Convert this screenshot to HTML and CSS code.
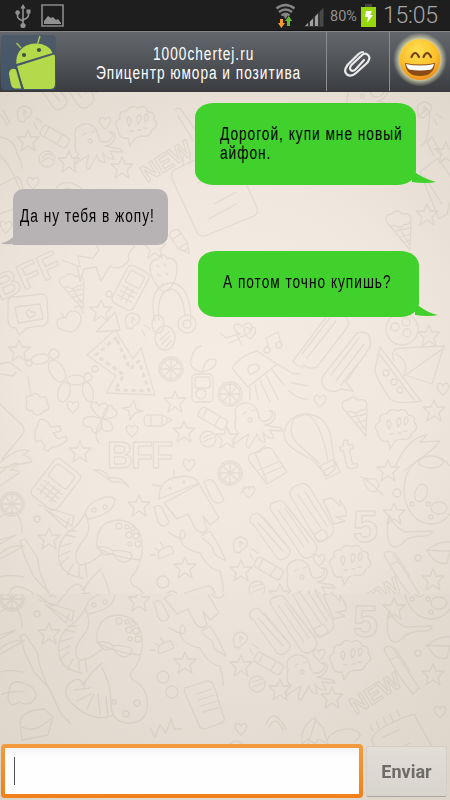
FILE: index.html
```html
<!DOCTYPE html>
<html lang="ru">
<head>
<meta charset="utf-8">
<title>1000chertej.ru</title>
<link rel="stylesheet" href="styles.css">
</head>
<body>
<div class="phone">
  <div class="status">
    <svg class="usb" width="16" height="26" viewBox="0 0 16 26"><path d="M8 3v19M2.500 10v3q0 3 5.500 5M13.500 9v3q0 3-5.500 5" fill="none" stroke="#929292" stroke-width="1.600"/><path d="M8 1l2.600 4.500H5.400z" fill="#929292"/><circle cx="2.600" cy="9.600" r="2.300" fill="#929292"/><path d="M11.500 6.500h4v4h-4z" fill="#929292"/><circle cx="8" cy="22.500" r="2.600" fill="#929292"/></svg>
    <svg class="gallery" width="23" height="23" viewBox="0 0 23 23"><path d="M1 1h21v21H1z" fill="none" stroke="#8b8b8b" stroke-width="1.600"/><path d="M3 20v-3l4-5 3 2 2-1 3 3 2-1 3 4v1z" fill="#929292"/></svg>
    <svg class="wifi" width="22" height="25" viewBox="0 0 22 25"><g fill="none" stroke="#858585" stroke-width="2.300"><path d="M1.500 5.500q9-7 18 0M4 9q6.500-5 13 0M6.500 12.500q4-3.500 8 0"/></g><path d="M8 12h5l-2.500 4z" fill="#858585"/><path d="M5 16h3v4h2l-3.700 5L3 20h2z" fill="#f79a2d"/><path d="M12 23v-5h-2l3.700-5 3.500 5h-2.200v5z" fill="#66b82e"/></svg>
    <svg class="signal" width="21" height="20" viewBox="0 0 21 20"><path d="M0 20L20 0v20z" fill="#343434"/><path d="M1 19l3-3v3zM6 14.500l3-3V19H6zM11 9.500l3-3V19h-3z" fill="#a0a0a0"/><path d="M16 4.500l3-3V19h-3z" fill="#494949"/></svg>
    <span class="percent">80%</span>
    <svg class="battery" width="15" height="23" viewBox="0 0 15 23"><path d="M4 0h7v3H4z" fill="#444"/><path d="M0 3h15v20H0z" fill="#97d70c"/><path d="M5 7h6l-2 4h3l-6 8 1-6H4z" fill="#fff"/></svg>
    <span class="clock">15:05</span>
  </div>

  <header class="bar">
    <svg class="avatar" width="55" height="55" viewBox="0 0 55 55">
      <defs><linearGradient id="av" x1="0" y1="0" x2="0" y2="1"><stop offset="0" stop-color="#4d5a69"/><stop offset="1" stop-color="#405469"/></linearGradient></defs>
      <rect width="55" height="55" rx="4" fill="url(#av)"/>
      <g fill="#b4da4b"><path d="M15.500 29C14 18 22 9 34 8.500q14 0 17.500 9.500z"/><path d="M15 31.500L53 19.500Q54 20 54 22v27q0 5-5 5H23z"/><path d="M8 39q0-4 3-5 4-1 6 3l4 16.500h-7q-3-.5-4-4z"/></g>
      <path d="M20 13l-4.500-5M36.500 9L39 1" stroke="#a3c652" stroke-width="1.500"/><path d="M15 31l6.500 23" stroke="#41536a" stroke-width="2"/><circle cx="23" cy="20" r="2.100" fill="#414f49"/><circle cx="38" cy="15" r="2.100" fill="#414f49"/>
    </svg>
    <div class="title">
      <div><span class="narrow t1">1000chertej.ru</span></div>
      <div><span class="narrow t2">Эпицентр юмора и позитива</span></div>
    </div>
    <div class="action">
      <svg width="30" height="28" viewBox="0 0 30 28"><path d="M21 10L12.500 19.500Q9.500 22 7.700 20t.8-5L18 6q4-4 7-1t-.5 7.500L13 23q-5 4.500-9 1.500t.5-9.500L15 4.500q2.500-2.500 5-2.500" fill="none" stroke="#e9e9e9" stroke-width="2.200" stroke-linecap="round"/></svg>
    </div>
    <div class="action emoji">
      <svg width="54" height="56" viewBox="0 0 54 56">
        <defs><radialGradient id="face" cx=".45" cy=".3" r=".75"><stop offset="0" stop-color="#ffe052"/><stop offset=".6" stop-color="#fcc02a"/><stop offset="1" stop-color="#ec8517"/></radialGradient><radialGradient id="glow"><stop offset=".7" stop-color="#f3efc0"/><stop offset=".82" stop-color="#d8d7b0" stop-opacity=".65"/><stop offset="1" stop-color="#d8d7b0" stop-opacity="0"/></radialGradient></defs>
        <circle cx="27" cy="27.500" r="27" fill="url(#glow)"/><circle cx="27" cy="27.500" r="20.500" fill="url(#face)"/>
        <path d="M18.500 25q3.500-8 7.500 0M30.500 25q3.500-8 7.500 0" fill="none" stroke="#764215" stroke-width="2.200" stroke-linecap="round"/><path d="M12 31q15 3 30 0-1 13-15 13T12 31z" fill="#8b4a16"/><path d="M13 32q14 3 28 0-.5 4-3 5.500-11 2-22 0-2.500-1.500-3-5.500z" fill="#fff"/>
      </svg>
    </div>
  </header>

  <div class="wall">
    <svg class="doodles" width="450" height="708" viewBox="0 92 450 708" aria-hidden="true">
      <defs>
        <radialGradient id="bgTop" gradientUnits="userSpaceOnUse" cx="225" cy="375" r="380"><stop offset="0" stop-color="#f5ede3"/><stop offset=".5" stop-color="#f0e8de"/><stop offset="1" stop-color="#ded6cb"/></radialGradient>
        <radialGradient id="bgLow" gradientUnits="userSpaceOnUse" cx="225" cy="560" r="350"><stop offset="0" stop-color="#efe7dd"/><stop offset="1" stop-color="#dbd3c8"/></radialGradient>
        <clipPath id="upper"><path d="M0 92h450v502H0z"/></clipPath><clipPath id="lower"><path d="M0 594h450v206H0z"/></clipPath>
        <path id="star" d="M0-11l3 7 8 0-6 6 2 8-7-5-7 5 2-8-6-6 8 0z"/>
        <path id="heart" d="M0 6q-8-7-5-11 3-2 5 2 2-4 5-2 3 4-5 11z"/>
        <g id="wheel"><circle r="12"/><circle r="10"/><path d="M-10 0h20M0-10v20M-7-7l14 14M-7 7l14-14"/></g>
        <g id="squid"><path d="M-12 0q-4-12 8-15 11-1 14 10 1 8 5 8 6 1 9-5 2-4-3-5 7-1 6 6-3 8-10 8l9 2q8 0 9 4-7 0-13-1l4 8q-7 1-11-6l2 10q-7-1-8-8l-8 14q-5 0 0-14-9 5-14 10-3-4 4-11-6-2-3-15z"/><path d="M-5-4l3-2M4-7l3-1"/><circle cx="2" cy="2" r="2"/></g>
        <g id="cloud"><path d="M-18 5q-6-7 2-10-2-9 7-8 3-7 11-3 8-4 10 4 8 0 6 7 6 7-2 11-2 8-11 6l-6 2-5 8-2-8q-9 2-10-9z"/><path d="M-7 2q-4-8 0-9 4 3 0 9M2 0q-3-9 2-9 3 4-2 9M9-2q-2-8 2-8 3 5-2 8M-6 7h3M2 6h3M8 4h3"/></g>
        <g id="bulb"><path d="M-7 8q-5-14 6-15 11 3 4 11-5 2-5 5zM-2 3v-6l3 3M10 5l6 4M8 10l3 6"/></g>
        <g id="usbkey"><rect x="-15" y="-5" width="30" height="11" rx="3" transform="rotate(30)"/><path d="M-6-9L-10-1M7-1L2 7"/></g>
        <g id="pencil"><path d="M-12-5h16l10 5-10 6h-16q-4-5 0-11zM-7-5v11M4-5v11M9-2v5"/></g>
        <g id="bubbles"><path d="M-42-12q-5-1-3-6 4-7 9-4L-6 12q3 5-2 9-6 5-10 1zM-24-26q-3-7 5-8 6-4 10 3L18 4q8 10-1 16-6 5-11-1zM-5-41q0-8 8-10 7-4 12 3l23 38q3 9-7 13-7 5-11-2z"/><path d="M-37-13L-12 15M-31-18L-8 10M-17-26L9 11M-10-28L14 7M3-41L26-8M10-44L32-10"/><rect x="20" y="-5" width="12" height="10" rx="3" transform="rotate(-30 26 0)"/></g>
        <g id="cone"><path d="M-12-2q-5-9 4-10 5-6 10 0 9-2 9 6-2 6-6 4-5 6-10 1-4 3-7-1zM-9 1l19 23 1-27M-4 5l14-3M0 11l10-3M5 16l5-2M-1 1l10 17"/></g>
        <g id="phoneDoodle"><g transform="rotate(28)"><rect x="-12" y="-20" width="24" height="42" rx="5"/><rect x="-8" y="-15" width="16" height="13" rx="2"/><path d="M-8 3H8M-8 8H8M-8 13H8M-3 1v15M3 1v15"/></g></g>
        <g id="balloon"><path d="M-26-8q3-20 24-20 19 2 23 24l4 31-8 7-14-16Q-27 4-26-8zM-16-23q-7 15 4 25l21 19M-4-28q14 5 22 46M-16-23l12-5M10 24l14-7 6 13-14 7zM13 29l14-7"/></g>
        <g id="octopus"><path d="M-25-4q-2-28 23-28 25 4 22 34l-2 6q-23-2-43-12zM18 8q-1 9-8 16-4 5 2 10 15 6 13 28-3 15-20 14-16-1-16-20 0-19-9-35M-20 16q-19 16-18 26M-40 26q-27-4-23-30 2-12 16-21 7-7 10-14 7 13 1 24-14 16-9 25 5 9 26-9M-39 38q-3-11-14-1-9 10 7 23 18 16 38 8"/><path d="M-24-5q11-1 15 4 6-2 18 2 3 7-6 9-8 0-12-9-7 4-12-1zM-52-1l-11 5M-50-9l-13 4M-47-15l-10-2M-46-21l-8 0M-53 5l-10 8M-49 12l-6 11M-43 14v12M-37 11l2 14M-40 38l7-8M-48 43l16-2M-45 54l14-7M-35 62l7-15M-22 67l-2-20M-14 70l-2-20"/><circle r="3" cx="-3" cy="-26"/><circle r="2" cx="5" cy="-25"/><circle r="2" cx="11" cy="-23"/><circle r="3" cx="7" cy="-17"/><circle r="3" cx="14" cy="-16"/><circle r="2" cx="8" cy="-8"/><circle r="3" cx="16" cy="-8"/><circle r="3" cx="15" cy="56"/><circle r="3" cx="4" cy="67"/><circle r="2" cx="-8" cy="55"/></g>
        <g id="android"><path d="M-26 9q0-19 18-22 16-3 22 6zM-21 13L14-6l20 34-9 7-7-9 4 14q-6 6-12-2l-7-14-11 5zM-31 17q6-4 9 3l6 12q-5 8-11 0zM19-8q7-6 12 3l8 15q-7 7-13-2zM-11-13v-7M-24-4l-8-1"/><circle r="1" cx="-15" cy="-2"/><circle r="1" cx="-1" cy="-8"/></g>
        <g id="note"><path d="M-24-11L24-34q5-1 7 3l26 59q2 5-3 8L5 56q-5 1-8-4l-25-53q-2-7 4-10zM-17-14v-10M-10-17v-10M-3-21v-10M4-25v-9M11-28v-9M18-32v-9M-2 3L25-10M14 24l22-12M9 39l27-15"/></g>
        <g id="headphones"><path d="M-17 15q-8-35 15-38 20 0 21 37M-13 14q-3-29 12-31 12 2 14 27"/><ellipse cx="-14" cy="18" rx="6" ry="9"/><circle cx="15" cy="18" r="9"/><circle cx="15" cy="18" r="4"/></g>
        <g id="scene">
          <use href="#bulb" x="26" y="113"/><use href="#star" x="28" y="141"/><use href="#usbkey" x="55" y="136"/><use href="#squid" x="88" y="139"/><use href="#cloud" x="136" y="124"/><use href="#star" x="69" y="162"/><circle cx="47" cy="159" r="8"/><path d="M42 158q6-7 10-2M42 162q6-7 11-2"/><use href="#star" x="122" y="168"/><use href="#heart" x="33" y="183"/><use href="#heart" x="105" y="123"/><path d="M0 137q15 2 17 17 5 8 5 14M0 155q12 12 20 35M1 115l7 11M3 110l7 13M175 110q4-4 7 1l17 24M178 116l15 24M55 190q9-15 29 0M58 194q9-11 20 0"/>
          <use href="#bubbles" x="72" y="86"/><text x="147" y="183" transform="rotate(-32 147 183)" font-size="24">NEW</text>
          <use href="#note" x="200" y="180"/><use href="#bulb" x="426" y="109"/><use href="#squid" x="360" y="94"/><use href="#pencil" x="181" y="242" transform="rotate(55 181 242)"/><use href="#star" x="155" y="248"/>
          <path d="M420 172l18-14 17 25-8 31-8 5zM424 176l18 28M434 156l-7-14 5-5 10 18M420 115q12-14 9 9-1 18-8 22"/><use href="#star" x="446" y="153"/><use href="#cone" x="400" y="226"/>
          <use href="#star" x="427" y="215"/><use href="#heart" x="6" y="227"/><path d="M0 185l16-8q4 0 5 5l5 18q1 5-5 6L0 214"/>
          <text x="0" y="301" transform="rotate(-24 0 301)" font-size="36">BFF</text>
          <path d="M62 260l18 7-2-11 15 2 6-8q-8-12 12-14 19-1 24 10-9 8-6 14-9 12-19 6l-9 15-5-14-12 2-4 13-3-16z"/>
          <use href="#cone" x="73" y="288" transform="translate(0 28) scale(1 .9)"/><use href="#phoneDoodle" x="131" y="287"/><path d="M150 266q2-7 8-7 4-8 9-1 10 0 10 10-1 20-14 24-14-13-13-26zM157 265l2 2M164 264l2 2M158 274l2 2M166 273l2 2M162 283l1 2"/><use href="#star" x="101" y="311"/><circle cx="109" cy="294" r="3"/>
          <path d="M8 300q3-5 8-3l26-3q5 1 5 5l1 22q-3 6-9 5l-12 2-8 7-3-7q-8 0-8-8zM15 307l25-3 3 15-25 4zM30 318q-7-6-2-8 3 0 3 2 5-1 4 3z"/>
          <path d="M58 328q-4-12 8-10 1-8 9-7 7 2 6 10-5 14-15 10zM65 318l-4-5M75 308q5-6 8 5M96 332l19-20 5 18z"/><use href="#bulb" x="134" y="320"/><use href="#headphones" x="172" y="306"/>
          <path d="M221 334l6 4 10-4M229 343l10-4M242 345l-5-10M240 334h-1q-9-8-2-10 4 0 5 3 8-8 10 0 0 7-12 10"/><path d="M269 349l-3-11 12-6 3 12"/><circle cx="267" cy="350" r="3"/><circle cx="279" cy="345" r="3"/>
          <path d="M293 361l36-48q9-4 14 2 9 6 3 14l-29 38q-8 3-13-2M293 361q4 6 11 6M323 376l34-43q16-4 13 14l-24 35 7 9-12-2q-8 5-15 0-6-5-3-13zM302 354l30-39M307 358l29-37M331 375l28-37M336 381l28-37M341 385l25-31"/>
          <circle cx="402" cy="329" r="16"/><circle cx="395" cy="327" r="4"/><circle cx="406" cy="322" r="4"/><circle cx="407" cy="333" r="4"/><use href="#star" x="429" y="336"/><use href="#heart" x="443" y="389"/><use href="#heart" x="250" y="333"/><use href="#heart" x="320" y="401"/>
          <path d="M380 347l41 54q-23 4-31-2-16-24-15-30zM380 355l34 45M394 361q-5-13 8-13l42-2-12 38-27-9M407 374l37-26M404 376q6-14-8-22"/><circle cx="386" cy="373" r="3"/><circle cx="394" cy="382" r="3"/><circle cx="400" cy="390" r="3"/>
          <path d="M232 368q9-13 25-17l20 13-29 23zM250 375q-5-9 2-10 8-3 7 5zM250 388v12M255 385l3 15M260 380l10 22M266 375l12 24M272 370l12 15M277 364l17 10M292 373l8 1M292 383l16 3M289 391q10 9 18 8"/>
          <use href="#wheel" x="230" y="394"/><use href="#squid" x="248" y="418"/><use href="#balloon" x="310" y="442"/><use href="#cone" x="356" y="412"/><use href="#cloud" x="396" y="427"/><use href="#star" x="434" y="411"/><use href="#star" x="227" y="438"/><use href="#wheel" x="230" y="473"/><text x="344" y="470" transform="rotate(-12 344 470)" font-size="44">t</text>
          <path d="M249 461q-3-8 11-9 6-7 12-3l15 23-20 12zM267 481l-12-28 10-7M259 470l19-8M263 475l19-8M395 467q13-30 32-32l-7 7 20-1-7 8-29 22"/><use href="#star" x="388" y="471"/>
          <path d="M27 402q-3-7 5-6 4-6 8 1 8-1 7 6 5 7-3 8-7 8-12 0-8 0-5-9zM31 395l-3-18M0 364l9-2 12 9M1 374l12 2 3-4"/><use href="#star" x="19" y="351"/><ellipse cx="40" cy="359" rx="9" ry="5" transform="rotate(-10 40 359)"/><circle cx="54" cy="354" r="5"/><circle cx="29" cy="363" r="3"/><ellipse cx="57" cy="371" rx="7" ry="12" transform="rotate(-32 57 371)"/><ellipse cx="76" cy="380" rx="9" ry="5"/><ellipse cx="64" cy="392" rx="6" ry="10" transform="rotate(15 64 392)"/><ellipse cx="88" cy="392" rx="5" ry="10" transform="rotate(-15 88 392)"/><circle cx="88" cy="377" r="4"/><circle cx="95" cy="369" r="3"/>
          <path d="M115 330l-28 25 29 21-10 17 49 2-14-47-8 11z"/><path d="M116 338l-20 17 28 20-9 15 34 1-10-30-9 8z" stroke-dasharray="2 6" stroke-width="3"/>
          <ellipse cx="165" cy="338" rx="10" ry="12"/><path d="M160 340l9-8M162 344l8-8M166 347l5-6"/><use href="#wheel" x="171" y="369"/><rect x="192" y="374" width="21" height="28" rx="4"/><rect x="195" y="377" width="15" height="11" rx="2"/><circle cx="201" cy="394" r="5"/><path d="M202 374q2-17 13-15 5 8-13 13-14-3-11-13 3-12 10-13"/>
          <path d="M102 419q-12-9-11-15 4-5 8 2 6-6 9 0 0 6-6 13M102 419q2-12 9-14 2 5 5 5 4 9-14 9M102 419q9 1 11 8 0 5-5 4-8 2-6-12M102 419q1 12-7 14-3-1-4-6-8 1-8-5 1-9 19-3M102 419q-10 15-3 24"/><use href="#star" x="175" y="402"/><use href="#star" x="184" y="432"/><use href="#star" x="80" y="452"/><use href="#heart" x="73" y="407"/><use href="#heart" x="132" y="431"/><use href="#heart" x="189" y="465"/><use href="#pencil" x="158" y="420"/><use href="#usbkey" x="213" y="418"/><circle cx="208" cy="439" r="8"/><path d="M203 438l9-4M203 442l11-5M134 400l2 9 7 2-8 2-5 7-1-9-7-3 8-1z"/>
          <path d="M38 424q1-7 7-4 5 3 5 7l10-1 1 5-8 2 5 6 8-3 1 4q-8 8-15 7l-4 4q-6-1-3-5l-4-6-5 2q-3-9 2-18zM0 404l22 21q4 5 0 10L2 459M0 463q18-17 29-12l-6 4q10 3 8 7L0 468M0 473q15-13 19-9l-9 6q10 0 9 3L0 486"/>
          <g transform="rotate(38 58 485)"><rect x="40" y="463" width="32" height="46" rx="5"/><rect x="44" y="468" width="23" height="16" rx="3"/><path d="M44 490h23M44 495h23M44 500h23M49 488v15M56 488v15M62 488v15"/></g>
          <text x="107" y="468" font-size="36" textLength="66">BFF</text><path d="M94 470q11-1 15 8 14-2 20 9-7-7-17-5-9-7-18-12M240 494q6-9 14-7"/><use href="#android" x="185" y="490"/>
          <g transform="translate(0 499)"><use href="#wheel" x="12" y="5"/><path d="M0 18q22-14 22 16M0 41l16-5-16 9M0 55q10-10 24-8l-24 13M0 78q10-3 23 0M2 100q15-4 22-2M39 6l35 11-2 10-27-17 21 19 3-9M20 42l5-2 12 18 3 15 8 20-14-15-9-19zM48 92l13 28 9 9M86 18q-2-12 14-18 12-5 15 1-1 14-27 19z"/><circle cx="94" cy="11" r="2"/><circle cx="105" cy="8" r="2"/><circle cx="37" cy="20" r="3"/><use href="#star" x="49" y="40"/><use href="#octopus" x="122" y="53"/><use href="#star" x="139" y="7"/><use href="#star" x="185" y="69"/><path d="M159 60q-4-11 12-13l3 7zM150 56h5M155 49l4 3M160 43l3 4M168 33q18 12 17 2-4-10-5 3 1 12 20 16 9 17 20 18 4 15 3 20M201 37l9-5 8 13 8 17-9-5-3-3-2-7-10-8M185 94l22-7q5 0 7 5l10 32q1 4-3 5l-16 6q-4 1-6-4l-14-32q-1-4 0-5M197 100l15-5M199 106l15-5M201 112l16-5M203 118l15-4"/><circle cx="163" cy="83" r="6"/><circle cx="172" cy="98" r="6"/><path d="M10 92q5-8 18-1 9 4 8 12-6 11-17 5-10 7-11-5zM20 128q2-12 24-13l9 8-5 18-26 5zM22 133q14 7 28-8M150 134l5 9 5-12 6 8 5-14 3 10h8"/></g>
          <text x="353" y="542" font-size="45">5</text><use href="#bubbles" x="295" y="536"/><use href="#bulb" x="242" y="544"/><use href="#star" x="241" y="571"/><use href="#usbkey" x="269" y="568"/><use href="#squid" x="300" y="575"/><use href="#cloud" x="350" y="563"/><use href="#heart" x="249" y="492"/><use href="#heart" x="319" y="560"/><path d="M323 500l9-2 8 8 0-6 6 10 0 6-10 1 9 4-11 3zM390 516q3 10 15 16l27-1q1 4-8 5-17 0-22 8-9 7-13-2-4-11 1-26M384 555q1-5 8-3l27 41-6 6q-13-15-29-44zM395 553l15 23M389 565l8-3M426 551q12-10 24-9M427 550q8 16 20 13l3-12q-12 0-23-1M365 485q-3-9 4-6 8-2 10 6-5 14-14 0M360 477q3-2 23 18"/><use href="#star" x="394" y="514"/><use href="#star" x="433" y="580"/><circle cx="418" cy="558" r="3"/><circle cx="397" cy="493" r="4"/><ellipse cx="431" cy="490" rx="27" ry="34"/><ellipse cx="421" cy="493" rx="6" ry="9" transform="rotate(20 421 493)"/><ellipse cx="439" cy="508" rx="8" ry="6"/><ellipse cx="431" cy="462" rx="12" ry="6"/><circle cx="412" cy="504" r="2"/><circle cx="428" cy="504" r="2"/><circle cx="431" cy="517" r="2"/>
          <circle cx="257" cy="589" r="8"/><path d="M252 587l10-3M253 592l10-4"/><use href="#star" x="280" y="595"/><use href="#star" x="332" y="603"/><text x="356" y="620" transform="rotate(-32 356 620)" font-size="24">NEW</text><path d="M266 629q8-18 20 5M269 632q7-13 14 3M302 649q-2-17 12-26l9 10 5 16-10-5-3 5-7-5zM316 624l-8 25M327 645q7-12 24-11 16 5 4 12M372 645q2-12 39-25 4-2 5 3l24 43M373 636l-3-6M379 633l-3-7M386 629l-3-7M393 626l-3-7M400 622l-3-7M371 645q12 23 21 25M383 642l16-7M390 658l20-10"/><use href="#heart" x="440" y="617"/><use href="#heart" x="241" y="634"/><path d="M225 655q12-17 20-2l8 17q-12 5-28 0zM240 649l-4 22"/>
        </g>
      </defs>
      <g clip-path="url(#upper)"><path d="M0 92h450v502H0z" fill="url(#bgTop)"/><use href="#scene" class="ink"/></g>
      <g clip-path="url(#lower)"><path d="M0 594h450v206H0z" fill="url(#bgLow)"/><use href="#scene" class="ink" y="95"/></g>
    </svg>

    <main class="chat">
      <div class="msg out first"><p><span class="narrow m1">Дорогой, купи мне новый</span><br><span class="narrow m2">айфон.</span></p><svg class="tail" width="26" height="12" viewBox="0 0 26 12"><path d="M0 0h4q9 6 20 9-11 2-24 0z" fill="#41d12c"/></svg></div>
      <div class="msg in"><p><span class="narrow m3">Да ну тебя в жопу!</span></p><svg class="tail" width="16" height="8" viewBox="0 0 16 8"><path d="M16 0h-3Q8 5 1 6q2 2 15 1z" fill="#b7b3b4"/></svg></div>
      <div class="msg out second"><p><span class="narrow m4">А потом точно купишь?</span></p><svg class="tail" width="26" height="12" viewBox="0 0 26 12"><path d="M0 1h4q9 7 19 9-9 2-23 0z" fill="#41d12c"/></svg></div>
    </main>
    <footer class="composer">
      <div class="field"><span class="caret"></span></div>
      <div class="send">Enviar</div>
    </footer>
  </div>
</div>
</body>
</html>
```
FILE: styles.css
```css
* { box-sizing: border-box; }
body { margin: 0; font-family: "Liberation Sans", sans-serif; }
svg { display: block; flex: none; }
.phone { width: 450px; height: 800px; display: flex; flex-direction: column; overflow: hidden; }
.status { height: 31px; flex: none; display: flex; align-items: flex-start; background: #1e1e1e; color: #919191; font-family: Roboto, sans-serif; border-bottom: 1px solid #111; }
.usb { margin: 3px 0 0 15px; }
.gallery { margin: 4px 0 0 10px; }
.wifi { margin: 3px 0 0 211px; }
.signal { margin: 7px 0 0 7px; }
.percent { margin: 8px 0 0 5px; width: 28px; font-size: 14.500px; line-height: 17px; white-space: nowrap; }
.battery { margin: 4px 0 0 3px; }
.clock { margin: 4px 0 0 7px; font-size: 23px; line-height: 24px; font-weight: 300; letter-spacing: -.2px; color: #a8a8a8; white-space: nowrap; }
.bar { height: 61px; flex: none; display: flex; background: linear-gradient(#64676b, #52565b 45%, #3a3c40); border-top: 1px solid #85878a; border-bottom: 1px solid #38393b; }
.avatar { margin: 3px 0 0 1px; }
.title { width: 270px; flex: none; padding: 13px 0 0 40px; color: #fff; }
.title div { height: 19px; line-height: 19px; }
.narrow { display: inline-block; font-size: 18px; letter-spacing: 1.3px; white-space: nowrap; transform: scaleX(.76); transform-origin: 0 50%; }
.t1 { margin-left: 57px; }
.action { width: 63px; flex: none; display: flex; justify-content: center; align-items: center; border-left: 1px solid #8b8d90; padding-top: 4px; }
.emoji { width: 61px; padding: 0; align-items: flex-start; }
.wall { flex: 1; display: grid; grid-template-rows: 1fr 58px; position: relative; }
.doodles { position: absolute; inset: 0; }
.ink, .ink * { fill: none; stroke: #7a6b62; }
.ink { stroke-width: 1.3; stroke-linecap: round; stroke-linejoin: round; opacity: .105; font-family: "Liberation Sans", sans-serif; font-weight: 700; }
.chat { position: relative; display: flex; flex-direction: column; padding-top: 11px; }
.msg { position: relative; }
.msg p { margin: 0; line-height: 19px; color: #000; }
.out { background: #41d12c; width: 221px; border-radius: 19px / 14px; }
.first { margin-left: 195px; height: 82px; padding: 22px 0 0 25px; }
.in { background: #b7b3b4; margin: 4px 0 0 13px; width: 155px; height: 56px; border-radius: 10px 10px 10px 0; padding: 18px 0 0 7px; }
.second { margin: 6px 0 0 198px; height: 66px; padding: 22px 0 0 25px; }
.out .tail { position: absolute; left: 217px; bottom: 0; }
.in .tail { position: absolute; left: -13px; bottom: 0; }
.composer { position: relative; display: flex; padding: 2px 2px 2px 1px; }
.field { width: 362px; height: 54px; border-radius: 4px; background: linear-gradient(#f29c3d, #f0801a); padding: 4px; display: flex; }
.field .caret { flex: 1; background: linear-gradient(#555, #555) 9px 9px / 1px 28px no-repeat, linear-gradient(#f4f4f4, #fefefe 10px); }
.send { margin: 2px 0 0 3px; width: 81px; height: 51px; background: linear-gradient(#e2ddd7, #d8d4ce); border: 1px solid #d4cec7; border-bottom-color: #aaa6a1; border-radius: 2px; color: #6f6b68; font: 700 18px/49px Roboto, sans-serif; text-align: center; }
```
